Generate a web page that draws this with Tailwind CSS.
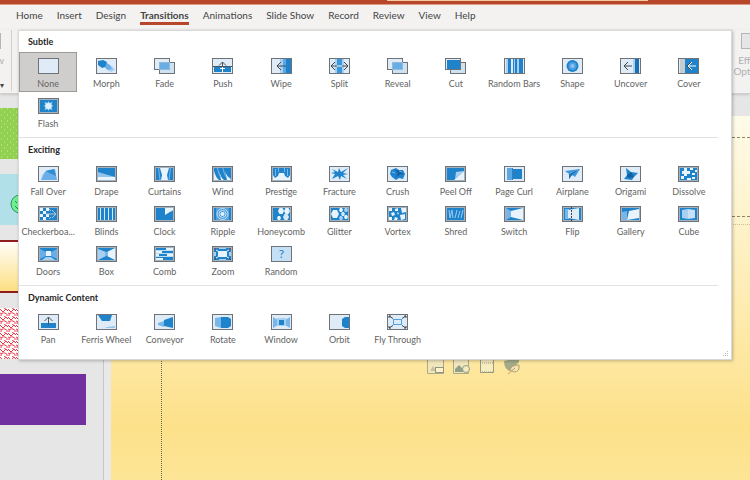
<!DOCTYPE html>
<html lang="en">
<head>
  <meta charset="UTF-8" />
  <meta name="viewport" content="width=device-width, initial-scale=1.0" />
  <title>Transitions</title>
  <script src="https://cdn.jsdelivr.net/npm/@tailwindcss/browser@4"></script>
</head>
<body class="relative flex h-screen flex-col overflow-hidden bg-[#e6e6e6] font-['Lato','Open_Sans',sans-serif] text-[#444]">

  <!-- Title bar -->
  <header class="h-[5px] shrink-0 border-b border-[#dc9a80] bg-[#b7472a]">
    <div class="ml-[387px] mr-[102px] h-px bg-[#f8c79b]"></div>
  </header>

  <!-- Ribbon tabs -->
  <nav class="flex h-[25px] shrink-0 gap-3.5 bg-[#f3f2f1] pl-4 text-[10px] leading-[20px] whitespace-nowrap">
    <a href="#">Home</a>
    <a href="#">Insert</a>
    <a href="#">Design</a>
    <a href="#" class="h-5 border-b-3 border-[#b7472a] font-bold">Transitions</a>
    <a href="#">Animations</a>
    <a href="#">Slide Show</a>
    <a href="#">Record</a>
    <a href="#">Review</a>
    <a href="#">View</a>
    <a href="#">Help</a>
  </nav>

  <!-- Ribbon -->
  <section class="flex h-16 shrink-0 items-start overflow-hidden border-b border-[#cfcfcf] bg-[#f3f2f1] text-[10px] leading-[11px] text-[#b0b0b0] shadow-sm">
    <button class="-ml-[32px] flex w-[36px] flex-col items-end pt-[3px]">
      <svg width="16" height="16" class="mr-[3px]" viewBox="0 0 16 16"><rect x=".5" y=".5" width="15" height="15" fill="#e2e2e2" stroke="#b5b5b5"/></svg>
      <span class="pt-1.5">Preview</span>
      <span class="pt-[14px] text-[8px] text-[#444]">▾</span>
    </button>
    <div class="ml-[7px] h-[61px] w-px bg-[#d0cfce]"></div>
    <button class="-mr-[19px] ml-auto flex w-[36px] flex-col items-center pt-[3px]">
      <svg width="20" height="16" viewBox="0 0 20 16"><rect x=".5" y=".5" width="19" height="15" fill="#e6e6e6" stroke="#b5b5b5"/></svg>
      <span class="pt-1.5">Effect</span>
      <span>Options</span>
    </button>
  </section>

  <!-- Workspace -->
  <main class="flex min-h-0 flex-1">
    <!-- Slide thumbnails -->
    <ul class="flex w-[104px] shrink-0 flex-col gap-[15px] border-r border-[#c6c6c6] pt-[14px] pr-[17px]">
      <li class="h-[51px] shrink-0 bg-[#92d050]">
        <svg width="100%" height="51"><defs><pattern id="dots" width="6" height="6" patternUnits="userSpaceOnUse"><path d="M1 1h1M4 4h1" stroke="#c9ecaa"/></pattern></defs><rect width="100%" height="51" fill="url(#dots)"/></svg>
      </li>
      <li class="h-[51px] shrink-0 bg-[#b2e0e9]">
        <svg width="87" height="51"><circle cx="20" cy="30" r="9" fill="#6df08f" stroke="#2f8f66"/><path d="M15 27l2 2m-2 3l3 3" stroke="#2f7f66"/></svg>
      </li>
      <li class="h-[53px] shrink-0 border-y-2 border-[#8f1d1d] bg-linear-to-b from-[#fffdf6] to-[#fddf80]"></li>
      <li class="h-[51px] shrink-0 bg-white">
        <svg width="100%" height="51"><defs><pattern id="squiggle" width="8" height="8" patternUnits="userSpaceOnUse"><path d="M0 1l3 3 3-3 2 2M1 8q0-4 4-3 3 1 2 3M4 0l3 2M0 5l2 1" fill="none" stroke="#ee3f4d"/></pattern></defs><rect width="100%" height="51" fill="url(#squiggle)"/></svg>
      </li>
      <li class="h-[51px] shrink-0 bg-[#7030a0]"></li>
    </ul>
    <div class="w-[7px] shrink-0 bg-[#e9e9e9]"></div>

    <!-- Slide canvas -->
    <div class="flex min-w-0 flex-1 flex-col pt-[22px]">
      <article class="flex flex-1 flex-col gap-[7px] bg-linear-to-b from-[#fffbe9] via-[#fde18a] via-85% to-[#fde596] pt-[21px] pl-[50px]">
        <div class="h-20 border-y border-l border-dashed border-[#8d8468]"></div>
        <div class="flex flex-1 items-start gap-2 border-t border-l border-dotted border-t-[#cdbf94] border-l-[#6d6850] pt-[132px] pl-[265px]">
          <svg width="18" height="18" viewBox="0 0 18 18" fill="none" stroke="#b0a986"><path d="M.5 0v16.500h16V0" fill="#f2e6bd"/><path d="M3 14l3-5 3 5z" fill="#c9c1a0" stroke="none"/><rect x="8.500" y="10.500" width="8" height="5" fill="#fff2c6" stroke="#8f9686"/></svg>
          <svg width="18" height="18" viewBox="0 0 18 18" fill="none" stroke="#b0a986"><path d="M.5 0v16.500h15V0" fill="#f2e6bd"/><path d="M2 15v-3l4-4 4 4v3z" fill="#8fa088" stroke="none"/><circle cx="13" cy="12" r="3.500" fill="#f7ebbd" stroke="#8f9f8c"/></svg>
          <svg width="16" height="18" viewBox="0 0 16 18" fill="none" stroke="#9a9a80"><path d="M1.500 0v15.500h13V0" fill="#f7ecc0"/><path d="M1 15h14M1 6h14" stroke-width="1" stroke-dasharray="1 1"/></svg>
          <svg width="18" height="18" viewBox="0 0 18 18" fill="none"><path d="M1 4q0 8 6 10l9-9V1z" fill="#a3aa88"/><path d="M7 13q1-5 9-5 1 7-5 7zM12 11l-7 6" fill="#f3e3b0" stroke="#b8a070"/></svg>
        </div>
      </article>
    </div>
  </main>

  <!-- Transition gallery drop-down -->
  <div id="gallery" class="absolute top-[30px] right-[18px] left-[18px] border border-[#d8d8d8] bg-white pr-[13px] pb-[11px] shadow-[1px_1px_3px_rgba(0,0,0,0.25)]">
    <svg class="absolute right-[2px] bottom-[2px]" width="6" height="6" fill="#a9bccb"><path d="M4 0h1v1h-1zM4 2h1v1h-1zM2 2h1v1h-1zM4 4h1v1h-1zM2 4h1v1h-1zM0 4h1v1h-1z"/></svg>
  </div>

  <script>
    // Shared pieces of the 21x16 icons
    const light = '<rect x=".5" y=".5" width="20" height="15" fill="#dfecf8" stroke="#6f7276"/>';
    const dark = '<rect x=".5" y=".5" width="20" height="15" fill="#a3b3bf" stroke="#6f7276"/><rect x="2" y="2" width="17" height="12" fill="#1f83cb"/>';
    const stacked = '<rect x="5.500" y="4.500" width="15" height="11" fill="#cfe2f2" stroke="#6f7276"/><rect x=".5" y=".5" width="15" height="11" fill="#dfecf8" stroke="#6f7276"/>';
    const hex = (x, y, r, c) => `<path fill="${c}" d="M${x - r} ${y}l${r / 2} ${-r}h${r}l${r / 2} ${r}l${-r / 2} ${r}h${-r}z"/>`;

    const sections = [
      { title: 'Subtle', items: [
        ['None', light],
        ['Morph', light + '<path fill="#a9d0f1" d="M12 7l4 1 3 4-4 2-5-3z"/><path fill="#69aee8" d="M9 4l5 3 2 4-4 1-5-4z"/><path fill="#1f83cb" d="M2 3l5-1 4 2-2 5-3 1-4-3z"/>'],
        ['Fade', stacked + '<rect x="5.500" y="4.500" width="10" height="7" fill="#67aee7" stroke="#93b9d8"/>'],
        ['Push', light + '<path fill="#1f83cb" d="M2 9h17v5h-17z"/><path stroke="#4d555c" d="M1 8.500h19"/><path fill="none" stroke="#4d555c" d="M10.500 4v5M7 7.500l3.500-3.500 3.500 3.500"/><path fill="none" stroke="#fff" d="M10.500 9v5M8 10.500h5"/>'],
        ['Wipe', light + '<path fill="#a9d0f1" d="M9 1h4v14h-4z"/><path fill="#5ba8e3" d="M12 1h3v14h-3z"/><path fill="#1f83cb" d="M15 1h5v14h-5z"/><path fill="none" stroke="#3f474e" d="M6 8h9M10 4L6 8l4 4"/>'],
        ['Split', light + '<path fill="#a9d0f1" d="M6 1h9v14h-9z"/><path fill="#3c96da" d="M8 1h5v14h-5z"/><path stroke="#fff" d="M7 8h7"/><path fill="none" stroke="#3f474e" d="M2 8h6M13 8h6M6 4L2 8l4 4M15 4l4 4-4 4"/>'],
        ['Reveal', stacked + '<rect x="5.500" y="4.500" width="10" height="7" fill="#67aee7" stroke="#93b9d8"/>'],
        ['Cut', stacked + '<path fill="#1f83cb" d="M2 2h13v9H2z"/>'],
        ['Random Bars', light + '<path fill="#a9d0f1" d="M2 1h2v14h-2zM9 1h6v14h-6z"/><path fill="#1f83cb" d="M4 1h3v14h-3zM9 1h1v14h-1zM11 1h2v14h-2zM15 1h4v14h-4z"/>'],
        ['Shape', light + '<circle cx="10.500" cy="8" r="6" fill="#1f83cb"/><circle cx="10.500" cy="8" r="4" fill="#4fa0e0"/><circle cx="10.500" cy="8" r="2" fill="#8cc3ef"/>'],
        ['Uncover', light + '<path fill="#a9d0f1" d="M13 1h2v14h-2z"/><path fill="#1b70b3" d="M15 1h4v14h-4z"/><path fill="none" stroke="#3f474e" d="M4 8h8M8 4L4 8l4 4"/>'],
        ['Cover', light + '<path fill="#c7ccd1" d="M2 1h5v14h-5z"/><path fill="#1f83cb" d="M7 1h13v14h-13z"/><path stroke="#3f474e" d="M13 4L9 8l4 4" fill="none"/><path fill="none" stroke="#fff" d="M10 8h8M14 4l-4 4 4 4"/>'],
        ['Flash', dark + '<path fill="#a9d5f7" d="M10.500 3l1 2 3-1-1 3 2 1-2 1 1 3-3-1-1 2-1-2-3 1 1-3-2-1 2-1-1-3 3 1z"/><circle cx="10.500" cy="8" r="3" fill="#dff1ff"/>']
      ] },
      { title: 'Exciting', items: [
        ['Fall Over', light + '<path fill="#a9d0f1" d="M3 14l1-5 3-3 8 8z"/><path fill="#69aee8" d="M4 12l3-6 10-3 2 11H3z"/><path fill="#2f8dd2" d="M7 5l9-2 2 7z"/>'],
        ['Drape', dark + '<path fill="#e8f3fc" d="M2 10l17 1v3H2z"/><path fill="#92c4ec" d="M2 6l17 5H2z"/>'],
        ['Curtains', dark + '<path fill="#e8f3fc" d="M6 2h9l-2 7 1 5H7l1-5z"/><path stroke="#78b6ea" d="M4.500 2L6 14M16.500 2L15 14"/>'],
        ['Wind', dark + '<path fill="#e8f3fc" d="M2 14V5q2 7 5 9zM7 5q2 7 5 9H9zM13 5q2 6 5 7l1 2h-4z"/><path stroke="#78b6ea" fill="none" d="M5.500 2q1 6 3 9M11 2q1 6 3 9"/>'],
        ['Prestige', dark + '<path fill="#e8f3fc" d="M2 14V9l2 3 3-2 1-3h5l1 3 3 2 2-3v5z"/><path stroke="#78b6ea" d="M4.500 3v7M7.500 2v4M13.500 2v4M16.500 3v7"/>'],
        ['Fracture', light + '<path fill="#1f83cb" d="M3 3l6 3 1-4 2 4 7-4-5 5 5 1-5 1 4 4-6-3-1 4-2-4-6 3 3-5-4-1 4-1z"/>'],
        ['Crush', light + '<path fill="#1f83cb" d="M4 4l5-2 3 2h4l2 4-2 5-4-1-3 2-4-3-2-3z"/><path fill="#105f9f" d="M8 4l3 3-2 4 5-3 3 1-3-4z"/><path stroke="#78b6ea" d="M5 6l3 1M12 5l3 1"/>'],
        ['Peel Off', dark + '<path fill="#e8f3fc" d="M19 5v9H9z"/><path fill="#a9d0f1" d="M10 13l1-7 8-1z"/>'],
        ['Page Curl', light + '<path fill="#5ba8e3" d="M3 2h6v12H3z"/><path fill="#1f83cb" d="M9 3h9v10H9z"/><path fill="#347fb8" d="M8 2h1v12H8z"/>'],
        ['Airplane', light + '<path fill="#3c96da" d="M3 5l15-2-5 8-3-2-3 4V8z"/><path stroke="#a9d0f1" d="M7 8l9-4"/><path fill="#1b70b3" d="M7 8l10-5-7 6-3 4z"/>'],
        ['Origami', light + '<path fill="#1f83cb" d="M6 2l5 4 7 1-4 4-2 3-8-1 3-4z"/><path fill="#105f9f" d="M7 9l4-3 3 5-6 1z"/>'],
        ['Dissolve', dark + '<path fill="#e8f3fc" d="M6 2h3v3h3v3H9v2H6V8H4V5h2zM12 2h3v2h-3zM14 7h3v2h-3zM3 10h3v3H3zM9 12h4v2H9zM14 11h3v2h-3zM17 4h2v2h-2z"/>'],
        ['Checkerboa...', dark + '<path fill="#e8f3fc" d="M2 2h3v3H2zM8 2h3v3H8zM5 5h3v3H5zM2 8h3v3H2zM8 8h3v3H8zM5 11h3v3H5z"/><path fill="none" stroke="#b9c5cf" d="M8 8h10M14 4l4 4-4 4M11 3l2 2M11 13l2-2"/>'],
        ['Blinds', dark + '<path stroke="#d3e8f9" d="M4.500 2v12M8.500 2v12M12.500 2v12M16.500 2v12"/>'],
        ['Clock', dark + '<path fill="#e8f3fc" d="M11 2h8v2l-8 5z"/><path fill="#a9d0f1" d="M15 6l4-2v1z"/>'],
        ['Ripple', dark + '<path fill="#4fa0e0" d="M4 2h13v12H4z"/><g fill="none" stroke="#c5e0f6"><circle cx="10.500" cy="8" r="5.500"/><circle cx="10.500" cy="8" r="3.500"/></g><circle cx="10.500" cy="8" r="2" fill="#e8f3fc"/>'],
        ['Honeycomb', dark + hex(10, 5, 3, '#e8f3fc') + hex(16, 5, 3, '#e8f3fc') + hex(15, 11, 3, '#d3e8f9') + hex(8, 12, 2, '#e8f3fc')],
        ['Glitter', dark + hex(6, 8, 4, '#e8f3fc') + hex(12, 4, 2, '#e8f3fc') + hex(17, 4, 2, '#a9d0f1') + hex(14, 8, 2, '#d3e8f9') + hex(17, 11, 2, '#e8f3fc') + hex(12, 12, 2, '#a9d0f1')],
        ['Vortex', dark + '<path fill="#e8f3fc" d="M2 2h3v3H2zM8 3l3-1v3H8zM14 2h5v4l-4 1zM4 7l3-1 1 3-3 1zM2 11h3v3H2zM13 9l5-1v5l-4 1zM8 11l3 1-1 2H7zM10 6l2 1-1 2z"/>'],
        ['Shred', dark + '<path fill="none" stroke="#9ccbf0" d="M4 4l1 8 2-8 1 8M10 12l2-8M13 12l2-7M16 12l2-8"/>'],
        ['Switch', dark + '<path fill="#78b6ea" d="M2 2l5 3v6l-5 3z"/><path fill="#e8f3fc" d="M7 5l12-3v12L7 11z"/>'],
        ['Flip', dark + '<path fill="#78b6ea" d="M3 3h4v10H3z"/><path fill="#dfecf8" d="M6 4l11-2v12L6 12z"/><path stroke="#3f474e" stroke-dasharray="2 1" d="M9.500 1v14"/>'],
        ['Gallery', dark + '<path fill="#78b6ea" d="M2 6l5-1v9H2z"/><path fill="#e8f3fc" d="M9 5l10-2v9L7 14z"/>'],
        ['Cube', dark + '<path fill="#a9d0f1" d="M4 4l6-1v10l-6-1z"/><path fill="#c7e0f6" d="M10 3l7 1v8l-7 1z"/>'],
        ['Doors', dark + '<path fill="#69aee8" d="M2 3l6 3v4l-6 3zM19 3l-6 3v4l6 3z"/><path fill="#e8f3fc" d="M8 5h5v5H8z"/><path fill="#a9d0f1" d="M4 14l4-3h5l4 3z"/>'],
        ['Box', dark + '<path fill="#a9d0f1" d="M2 3l8 3v4l-8 4z"/><path fill="#e8f3fc" d="M19 2l-8 4v4l8 4z"/><path fill="#78b6ea" d="M9 6h3v4H9z"/>'],
        ['Comb', dark + '<path fill="#e8f3fc" d="M12 2h7v2h-7zM2 5h6v2H2zM13 8h6v2h-6zM2 8h3v2H2zM2 12h7v2H2z"/><path stroke="#b9dcf5" d="M2 4.500h17M2 7.500h17M2 10.500h17"/>'],
        ['Zoom', dark + '<path fill="#a9d0f1" d="M7 2h7v1H7zM7 13h7v1H7zM2 6h2v4H2zM17 6h2v4h-2z"/><path fill="#e8f3fc" d="M6 5h9v6H6z"/><path stroke="#e8f3fc" d="M4 4l2 1M17 4l-2 1M4 12l2-1M17 12l-2-1"/><path stroke="#a33d3d" d="M2 2l2 2M19 2l-2 2"/><path stroke="#3f474e" d="M2 14l2-2M19 14l-2-2"/>'],
        ['Random', '<rect x=".5" y=".5" width="20" height="15" fill="#c5dff4" stroke="#6f7276"/><text x="10.500" y="12" text-anchor="middle" font-size="12" fill="#1f83cb">?</text>']
      ] },
      { title: 'Dynamic Content', items: [
        ['Pan', light + '<path fill="#1f83cb" d="M3 9h15v5H3z"/><path fill="none" stroke="#4d555c" d="M10.500 3v8M6.500 7l4-4 4 4"/>'],
        ['Ferris Wheel', light + '<path fill="#1f83cb" d="M2 1h14l-2 6H6z"/><path fill="#92c4ec" d="M11 13l8-1v2H9z"/>'],
        ['Conveyor', light + '<path fill="#78b6ea" d="M4 9l6-2v6l-6-2z"/><path fill="#1f83cb" d="M10 6l9-3v11l-9-2z"/>'],
        ['Rotate', light + '<path fill="#78b6ea" d="M3 4l6-1v11l-6-2z"/><path fill="#1f83cb" d="M9 3l7 0 3 2v7l-3 2H9z"/>'],
        ['Window', light + '<path fill="#78b6ea" d="M2 3l5 3v5l-5 3zM19 3l-5 3v5l5 3z"/><path fill="#a9d0f1" d="M6 4h9v8H6z"/><path fill="#1f83cb" d="M8 6h5v5H8z"/>'],
        ['Orbit', light + '<path fill="#1f83cb" d="M13 5l3-2h4v11h-4l-3-2z"/>'],
        ['Fly Through', light + '<rect x="6.500" y="5.500" width="8" height="5" fill="#dfecf8" stroke="#4fa0e0"/><path fill="none" stroke="#3f474e" d="M2 2l4 2.500M19 2l-4 2.500M2 14l4-2.500M19 14l-4-2.500M2 4V2h2M19 4V2h-2M2 12v2h2M19 12v2h-2"/>']
      ] }
    ];

    const gallery = document.getElementById('gallery');
    sections.forEach((section, i) => {
      const items = section.items.map(([name, art]) => `
        <button class="flex h-10 flex-col items-center border pt-[5px] ${name === 'None' ? 'border-[#9c9a98] bg-[#d0cecc]' : 'border-transparent'}">
          <svg class="shrink-0" width="21" height="16" viewBox="0 0 21 16">${art}</svg>
          <span class="pt-[3px] text-[9px] leading-[13px] whitespace-nowrap text-[#646464]">${name}</span>
        </button>`).join('');
      gallery.insertAdjacentHTML('beforeend', `
        <section class="${i ? 'mt-[5px] border-t border-[#e3e3e3] pt-px' : ''}">
          <h2 class="pl-[9px] text-[9px] leading-[21px] font-bold text-[#262626]">${section.title}</h2>
          <div class="grid grid-cols-12">${items}</div>
        </section>`);
    });
  </script>
</body>
</html>
